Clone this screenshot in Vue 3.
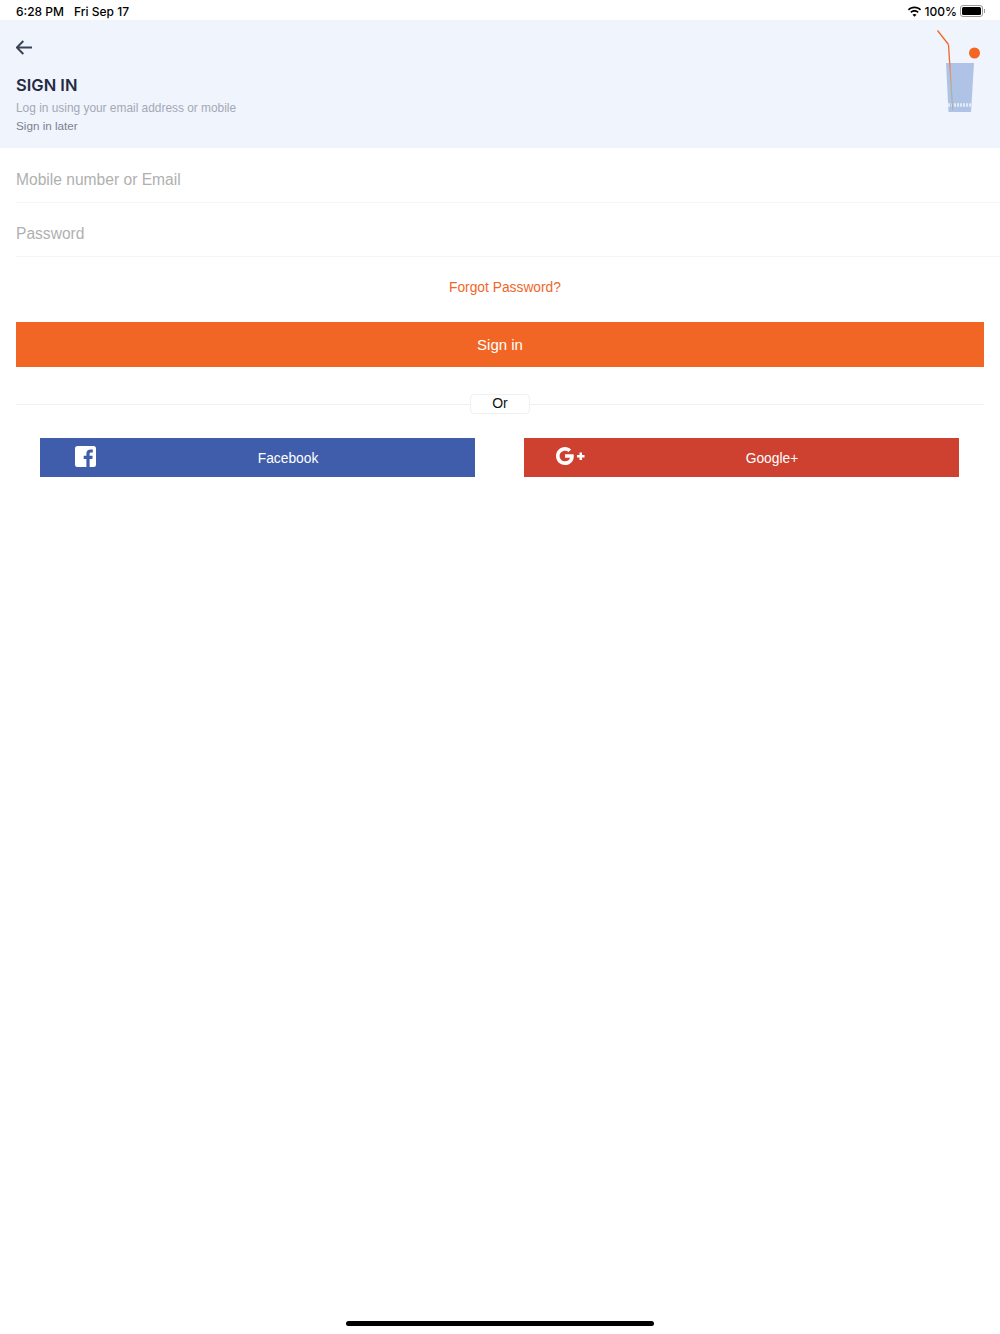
<template>
  <div class="page">
    <!-- Status bar -->
    <div class="status-bar">
      <div class="status-left">
        <span>6:28 PM</span>
        <span>Fri Sep 17</span>
      </div>
      <div class="status-right">
        <svg class="wifi" width="15" height="11" viewBox="0 0 15 11">
          <path d="M7.5 2.2c2.1 0 4 .8 5.5 2.2l1.1-1.2C12.3 1.5 10 .5 7.5.5S2.700 1.500.9 3.200L2 4.400c1.500-1.400 3.400-2.200 5.500-2.200z" fill="#000" />
          <path d="M7.500 5.700c1.200 0 2.200.4 3.100 1.200l1.100-1.200C10.600 4.600 9.100 4 7.500 4s-3.100.6-4.200 1.700l1.100 1.200c.9-.8 1.900-1.200 3.100-1.200z" fill="#000" />
          <path d="M7.500 10.800l2-2.100c-.5-.5-1.200-.8-2-.8s-1.500.3-2 .8z" fill="#000" />
        </svg>
        <span>100%</span>
        <div class="battery">
          <div class="battery-body"><div class="battery-fill"></div></div>
          <div class="battery-tip"></div>
        </div>
      </div>
    </div>

    <!-- Header -->
    <header class="header">
      <button class="back" aria-label="Back">
        <svg width="17" height="15" viewBox="0 0 17 15" fill="none" stroke="#3a4256" stroke-width="2">
          <path d="M16 7.500H1M7.300 1L.8 7.500 7.300 14" />
        </svg>
      </button>
      <h1 class="title">SIGN IN</h1>
      <p class="subtitle">Log in using your email address or mobile</p>
      <a class="later">Sign in later</a>

      <svg class="glass" width="56" height="84" viewBox="0 0 56 84">
        <defs>
          <linearGradient id="straw" x1="0" y1="30" x2="0" y2="82" gradientUnits="userSpaceOnUse">
            <stop offset="0" stop-color="#f26725" />
            <stop offset="0.2" stop-color="#e8935c" />
            <stop offset="0.55" stop-color="#aeb0a8" />
            <stop offset="1" stop-color="#aeb0a8" />
          </linearGradient>
        </defs>
        <path d="M9 33H37L34 82H11.500z" fill="#aec3e6" />
        <path d="M11 75H34.500" fill="none" stroke="#e3eaf7" stroke-width="3.500" stroke-dasharray="2 1" />
        <path d="M0.500 0.500L11.500 14.500" fill="none" stroke="#f26725" stroke-width="1.300" />
        <path d="M11.500 14.500L15.700 80" fill="none" stroke="url(#straw)" stroke-width="1.300" />
        <circle cx="37.500" cy="23" r="5.500" fill="#f26522" />
      </svg>
    </header>

    <!-- Form -->
    <form class="form" @submit.prevent>
      <div class="field">
        <input type="text" placeholder="Mobile number or Email" />
      </div>
      <div class="field">
        <input type="password" placeholder="Password" />
      </div>
      <a class="forgot">Forgot Password?</a>
      <button class="submit" type="submit">Sign in</button>

      <div class="divider">
        <span class="or">Or</span>
      </div>

      <div class="social">
        <button class="social-btn fb" type="button">
          <svg class="social-icon" width="21" height="21" viewBox="0 0 21 21">
            <path d="M2.500 0H18.500A2.500 2.500 0 0 1 21 2.500V18.500A2.500 2.500 0 0 1 18.500 21H14.600V13H17.300L17.700 9.800H14.600V7.900C14.600 7 14.900 6.400 16.200 6.400H17.800V3.600C17.500 3.500 16.600 3.400 15.500 3.400 13.100 3.400 11.400 4.900 11.400 7.500V9.800H8.700V13H11.400V21H2.500A2.500 2.500 0 0 1 0 18.500V2.500A2.500 2.500 0 0 1 2.500 0Z" fill="#fff" />
          </svg>
          Facebook
        </button>
        <button class="social-btn gp" type="button">
          <svg class="social-icon gp-icon" width="29" height="18" viewBox="0 0 29 18">
            <path d="M9 7.300V10.700H14C13.600 12.900 11.800 14.300 9 14.300 6 14.300 3.600 11.900 3.600 9S6 3.700 9 3.700C10.400 3.700 11.600 4.200 12.500 5L15.100 2.400C13.500 .9 11.400 0 9 0 4 0 0 4 0 9S4 18 9 18C14.200 18 17.800 14.300 17.800 9.200 17.800 8.500 17.700 7.900 17.600 7.300Z" fill="#fff" />
            <path d="M23.500 5.500H26V8H28.500V10.500H26V13H23.500V10.500H21V8H23.500Z" fill="#fff" />
          </svg>
          Google+
        </button>
      </div>
    </form>

    <div class="home-indicator"></div>
  </div>
</template>

<script setup>
</script>

<style>
body {
  background: #fff;
}
</style>

<style scoped>
.page {
  width: 1000px;
  height: 1334px;
  display: flex;
  flex-direction: column;
  font-family: "Liberation Sans", Arial, sans-serif;
  color: #000;
  overflow: hidden;
}

.status-bar {
  height: 20px;
  padding: 2px 15px 0 16px;
  box-sizing: border-box;
  display: flex;
  justify-content: space-between;
  align-items: center;
  font-family: Inter, sans-serif;
  font-size: 12px;
  font-weight: 500;
  flex-shrink: 0;
}

.status-left {
  display: flex;
  gap: 10px;
}

.status-right {
  display: flex;
  align-items: center;
  gap: 3px;
}

.wifi {
  margin-right: 0;
}

.battery {
  display: flex;
  align-items: center;
  gap: 1px;
}

.battery-body {
  width: 23px;
  height: 12px;
  border: 1px solid #9a9a9a;
  border-radius: 3px;
  padding: 1px;
  box-sizing: border-box;
}

.battery-fill {
  width: 100%;
  height: 100%;
  background: #000;
  border-radius: 1.500px;
}

.battery-tip {
  width: 1px;
  height: 4px;
  background: #9a9a9a;
}

.header {
  position: relative;
  height: 128px;
  background: #f0f4fd;
  padding: 19px 16px 0;
  box-sizing: border-box;
  flex-shrink: 0;
}

.back {
  display: block;
  padding: 0;
  border: none;
  background: none;
  height: 17px;
  line-height: 0;
}

.title {
  margin: 19px 0 0;
  font-family: Inter, sans-serif;
  font-size: 16.500px;
  line-height: 20px;
  font-weight: 600;
  color: #252b42;
}

.subtitle {
  margin: 4px 0 0;
  font-size: 11.900px;
  line-height: 18px;
  color: #a4a9b5;
}

.later {
  display: block;
  margin-top: 0;
  font-size: 11.700px;
  line-height: 18px;
  color: #7c8290;
}

.glass {
  position: absolute;
  top: 10px;
  right: 7px;
}

.form {
  display: flex;
  flex-direction: column;
}

.field {
  margin-left: 16px;
  height: 54px;
  padding-top: 8px;
  border-bottom: 1px solid #f5f5f5;
  box-sizing: border-box;
  display: flex;
}

.field:first-child {
  margin-top: 1px;
}

.field input {
  flex: 1;
  border: none;
  outline: none;
  padding: 0;
  font-family: "Liberation Sans", Arial, sans-serif;
  font-size: 15.600px;
  background: transparent;
}

.field input::placeholder {
  color: #b0b0b0;
  opacity: 1;
}

.forgot {
  margin: 21px 0 0 449px;
  font-size: 13.800px;
  line-height: 20px;
  color: #f1662a;
}

.submit {
  margin: 24px 16px 0;
  height: 45px;
  border: none;
  background: #f16625;
  color: #fff;
  font-family: "Liberation Sans", Arial, sans-serif;
  font-size: 15px;
}

.divider {
  margin: 24px 16px 0;
  height: 25px;
  display: flex;
  justify-content: center;
  align-items: center;
  background: linear-gradient(#f0f0f0, #f0f0f0) 0 13px / 100% 1px no-repeat;
}

.or {
  width: 60px;
  height: 20px;
  line-height: 16px;
  box-sizing: border-box;
  text-align: center;
  font-size: 14px;
  color: #111;
  background: #fff;
  border: 1px solid #f0f0f0;
  border-radius: 4px;
}

.social {
  margin: 22px 41px 0 40px;
  display: grid;
  grid-template-columns: 435px 435px;
  column-gap: 49px;
}

.social-btn {
  position: relative;
  height: 39px;
  border: none;
  color: #fff;
  font-family: "Liberation Sans", Arial, sans-serif;
  font-size: 13.800px;
  padding: 1px 0 0 61px;
}

.fb {
  background: #405dac;
}

.gp {
  background: #ce4130;
}

.social-icon {
  position: absolute;
  left: 35px;
  top: 8px;
}

.gp-icon {
  left: 32px;
  top: 9px;
}

.home-indicator {
  margin: auto auto 8px;
  width: 308px;
  height: 5px;
  border-radius: 3px;
  background: #000;
}
</style>
